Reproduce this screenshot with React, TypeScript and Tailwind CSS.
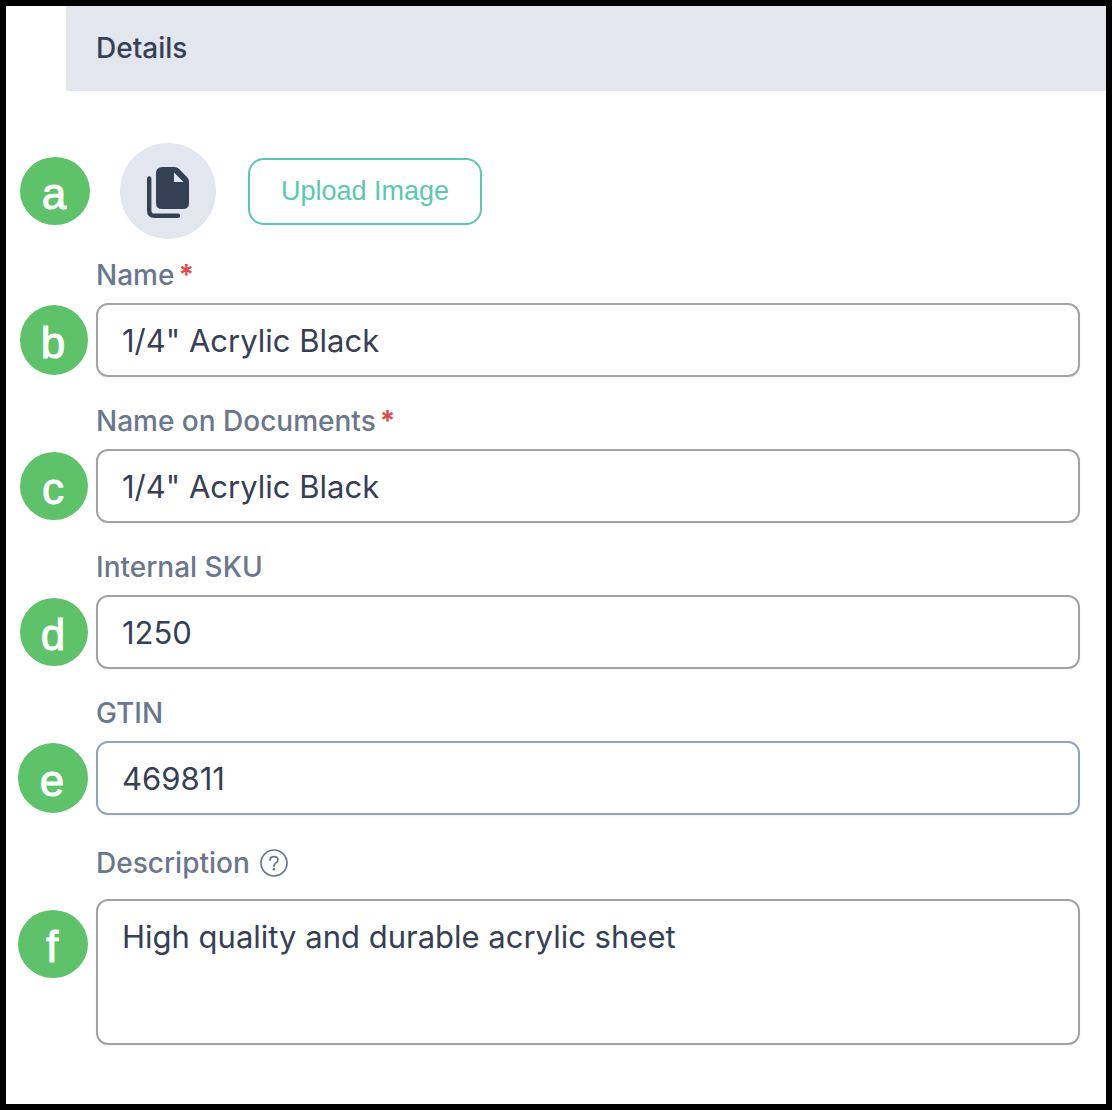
import type { ReactNode } from "react";

const control =
  "block w-full rounded-xl border-2 bg-white px-6 text-[31px] text-[#354054] shadow-xs outline-none";

function Badge({ letter, shape }: { letter: string; shape: string }) {
  return (
    <span
      className={`flex shrink-0 items-center justify-center rounded-[50%] bg-[#5dc269] pt-1.5 pr-0.5 font-['Liberation_Sans',Arial,sans-serif] text-[44px] leading-none text-white [-webkit-text-stroke:1px_white] ${shape}`}
    >
      {letter}
    </span>
  );
}

function Label({ id, required, children }: { id: string; required?: boolean; children: ReactNode }) {
  return (
    <label htmlFor={id} className="ml-[90px] flex w-fit items-center text-[28px] leading-9 font-medium text-[#6a778d]">
      {children}
      {required && <span className="ml-1 font-bold text-[#de4b48]">*</span>}
    </label>
  );
}

type FieldProps = {
  id: string;
  label: string;
  value: string;
  letter: string;
  shape: string;
  gutter: string;
  border: string;
  required?: boolean;
};

const fields: FieldProps[] = [
  { id: "name", label: "Name", value: '1/4" Acrylic Black', letter: "b", shape: "h-[70px] w-[68px]", gutter: "pl-3.5", border: "border-[#a3a3a3]", required: true },
  { id: "document-name", label: "Name on Documents", value: '1/4" Acrylic Black', letter: "c", shape: "size-[68px]", gutter: "pl-3.5", border: "border-[#a3a3a3]", required: true },
  { id: "sku", label: "Internal SKU", value: "1250", letter: "d", shape: "size-[68px]", gutter: "pl-3.5", border: "border-[#a3a3a3]" },
  { id: "gtin", label: "GTIN", value: "469811", letter: "e", shape: "size-[70px]", gutter: "pl-3", border: "border-[#94a3b8]" },
];

function Field({ id, label, value, letter, shape, gutter, border, required }: FieldProps) {
  return (
    <div>
      <Label id={id} required={required}>
        {label}
      </Label>
      <div className="mt-2.5 flex items-center">
        <div className={`w-[90px] shrink-0 ${gutter}`}>
          <Badge letter={letter} shape={shape} />
        </div>
        <input id={id} type="text" required={required} defaultValue={value} className={`${control} h-[74px] ${border}`} />
      </div>
    </div>
  );
}

function FilesIcon() {
  return (
    <svg viewBox="0 -2 42 53" className="h-[53px] w-[42px]" aria-hidden="true">
      <path
        d="M2.2 11.5V43.5Q2.2 48.8 7.5 48.8H31"
        fill="none"
        stroke="#354054"
        strokeWidth="4.4"
        strokeLinecap="round"
      />
      <path
        d="M15.5 0H27.5Q30 0 31.8 1.8L40.2 10.2Q42 12 42 14.5V36Q42 42 36 42H15Q9 42 9 36V6.500Q9 0 15.5 0Z"
        fill="#354054"
      />
      <path d="M27 5.500V15H36.500Z" fill="#e2e6ee" />
    </svg>
  );
}

function HelpIcon() {
  return (
    <svg viewBox="0 0 28 28" className="size-7" fill="none" stroke="#6a778d" aria-hidden="true">
      <circle cx="14" cy="14" r="13" strokeWidth="1.7" />
      <path
        d="M10 11.200C10.200 9 11.800 7.700 14 7.700C16.300 7.700 17.900 9 17.900 11C17.900 14 14 13.800 14 17"
        strokeWidth="1.8"
        strokeLinecap="round"
      />
      <circle cx="14" cy="20.300" r="1.300" fill="#6a778d" stroke="none" />
    </svg>
  );
}

export default function App() {
  return (
    <main className="min-h-screen border-6 border-black bg-white pb-[59px] font-[Inter,sans-serif]">
      <header className="ml-[60px] bg-[#e2e6ee] px-[30px] py-6">
        <h1 className="text-[28px] leading-[37px] font-medium text-[#354054]">Details</h1>
      </header>

      <form className="pr-[26px]">
        <div className="mt-[52px] flex items-center pl-3.5">
          <Badge letter="a" shape="h-[68px] w-[70px]" />
          <div className="ml-[30px] flex size-24 items-center justify-center rounded-full bg-[#e2e6ee]">
            <FilesIcon />
          </div>
          <button
            type="button"
            className="ml-8 h-[67px] rounded-2xl border-2 border-[#5bc8b0] px-[31px] font-['Liberation_Sans',Arial,sans-serif] text-[27px] text-[#5bc8b0]"
          >
            Upload Image
          </button>
        </div>

        <div className="mt-[18px] flex flex-col gap-[26px]">
          {fields.map((field) => (
            <Field key={field.id} {...field} />
          ))}
        </div>

        <div className="mt-[30px]">
          <div className="flex items-center">
            <Label id="description">Description</Label>
            <button type="button" aria-label="About the description" className="ml-2.5">
              <HelpIcon />
            </button>
          </div>
          <div className="mt-[18px] flex items-start">
            <div className="w-[90px] shrink-0 pt-[11px] pl-3">
              <Badge letter="f" shape="h-[68px] w-[70px]" />
            </div>
            <textarea
              id="description"
              defaultValue="High quality and durable acrylic sheet"
              className={`${control} h-[146px] resize-none border-[#a3a3a3] py-3 leading-[48px]`}
            />
          </div>
        </div>
      </form>
    </main>
  );
}
